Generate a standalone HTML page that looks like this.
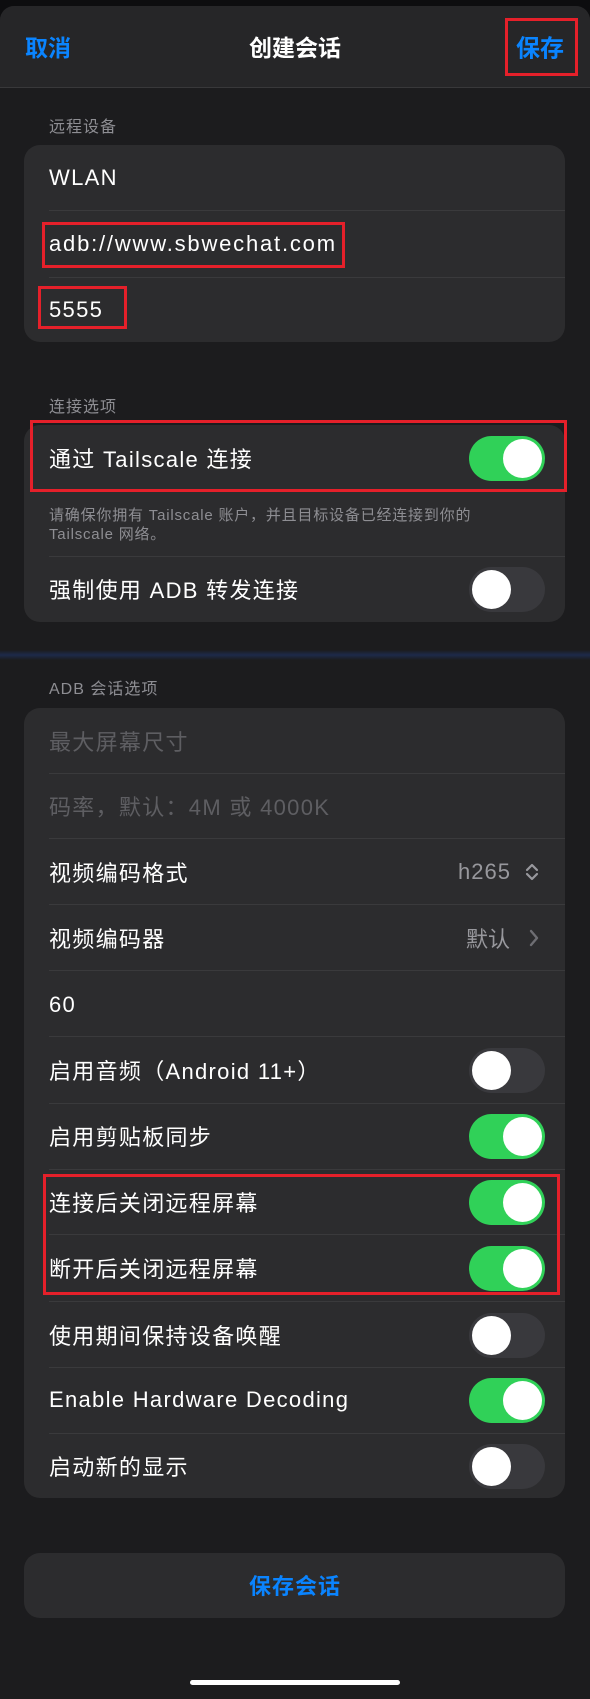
<!DOCTYPE html>
<html><head><meta charset="utf-8"><style>
*{margin:0;padding:0;box-sizing:border-box}
body{width:590px;height:1699px;background:#0d0d0f;font-family:"Liberation Sans","Noto Sans CJK SC",sans-serif;position:relative;overflow:hidden;color:#fff}
.sheet{position:absolute;left:0;top:6px;width:590px;height:1693px;background:#1c1c1e;border-radius:14px 14px 0 0}
.hdr{position:absolute;left:0;top:6px;width:590px;height:82px;background:#262628;border-radius:14px 14px 0 0;border-bottom:1px solid #38383a}
.a{position:absolute}
.lbl{position:absolute;left:49px;font-size:16px;color:#8e8e93;letter-spacing:1px;transform:translateY(-50%)}
.card{position:absolute;left:24px;width:541px;background:#2c2c2e;border-radius:16px}
.t{position:absolute;left:49px;font-size:22px;letter-spacing:1.3px;transform:translateY(-50%);white-space:nowrap}
.sep{position:absolute;left:49px;right:25px;height:1px;background:#3a3a3c}
.tg{position:absolute;left:469px;width:76px;height:45px;border-radius:23px;background:#39393d}
.tg::after{content:"";position:absolute;top:3px;left:3px;width:39px;height:39px;border-radius:50%;background:#fff}
.tg.on{background:#30d158}
.tg.on::after{left:34px}
.red{position:absolute;border:3px solid #e5202a}
</style></head><body>
<div class="sheet"></div>
<div class="hdr"></div>
<div class="a" style="left:25px;top:46px;transform:translateY(-50%);font-size:23px;color:#0a84ff;font-weight:bold">取消</div>
<div class="a" style="left:0;width:590px;text-align:center;top:46px;transform:translateY(-50%);font-size:23px;font-weight:bold">创建会话</div>
<div class="a" style="left:516px;top:46px;transform:translateY(-50%);font-size:24px;color:#0a84ff;font-weight:bold">保存</div>
<div class="red" style="left:505px;top:18px;width:73px;height:58px"></div>

<div class="lbl" style="top:125px">远程设备</div>
<div class="card" style="top:145px;height:197px"></div>
<div class="t" style="top:178px">WLAN</div>
<div class="sep" style="top:210px"></div>
<div class="t" style="top:244px;letter-spacing:1.8px">adb://www.sbwechat.com</div>
<div class="sep" style="top:277px"></div>
<div class="t" style="top:310px">5555</div>
<div class="red" style="left:42px;top:222px;width:303px;height:46px"></div>
<div class="red" style="left:38px;top:286px;width:89px;height:43px"></div>

<div class="lbl" style="top:405px">连接选项</div>
<div class="card" style="top:425px;height:197px"></div>
<div class="t" style="top:458px">通过 Tailscale 连接</div>
<div class="tg on" style="top:436px"></div>
<div class="red" style="left:30px;top:420px;width:537px;height:72px"></div>
<div class="a" style="left:49px;top:506px;font-size:15px;line-height:19px;color:#8e8e93;letter-spacing:0.8px">请确保你拥有 Tailscale 账户，并且目标设备已经连接到你的<br>Tailscale 网络。</div>
<div class="sep" style="top:556px"></div>
<div class="t" style="top:589px">强制使用 ADB 转发连接</div>
<div class="tg" style="top:567px"></div>

<div class="a" style="left:0;top:650px;width:590px;height:10px;background:linear-gradient(#1c1c1e,#1d2a4a 50%,#1c1c1e)"></div>

<div class="lbl" style="top:687px">ADB 会话选项</div>
<div class="card" style="top:708px;height:790px"></div>
<div class="t" style="top:741px;color:#5e5e62">最大屏幕尺寸</div>
<div class="sep" style="top:773px"></div>
<div class="t" style="top:806px;color:#5e5e62">码率，默认：4M 或 4000K</div>
<div class="sep" style="top:838px"></div>
<div class="t" style="top:872px">视频编码格式</div>
<div class="a" style="left:458px;top:872px;transform:translateY(-50%);font-size:22px;color:#98989d;letter-spacing:1px">h265</div>
<svg class="a" style="left:524px;top:862px" width="16" height="20" viewBox="0 0 16 20"><path d="M3 8 L8 3 L13 8 M3 12 L8 17 L13 12" fill="none" stroke="#98989d" stroke-width="2.2" stroke-linecap="round" stroke-linejoin="round"/></svg>
<div class="sep" style="top:904px"></div>
<div class="t" style="top:938px">视频编码器</div>
<div class="a" style="left:466px;top:938px;transform:translateY(-50%);font-size:22px;color:#98989d">默认</div>
<svg class="a" style="left:528px;top:928px" width="12" height="20" viewBox="0 0 12 20"><path d="M3 3 L9 10 L3 17" fill="none" stroke="#6e6e73" stroke-width="2.4" stroke-linecap="round" stroke-linejoin="round"/></svg>
<div class="sep" style="top:970px"></div>
<div class="t" style="top:1005px">60</div>
<div class="sep" style="top:1036px"></div>
<div class="t" style="top:1070px">启用音频（Android 11+）</div>
<div class="tg" style="top:1048px"></div>
<div class="sep" style="top:1103px"></div>
<div class="t" style="top:1136px">启用剪贴板同步</div>
<div class="tg on" style="top:1114px"></div>
<div class="sep" style="top:1169px"></div>
<div class="t" style="top:1202px">连接后关闭远程屏幕</div>
<div class="tg on" style="top:1180px"></div>
<div class="sep" style="top:1234px"></div>
<div class="t" style="top:1268px">断开后关闭远程屏幕</div>
<div class="tg on" style="top:1246px"></div>
<div class="red" style="left:43px;top:1174px;width:517px;height:121px"></div>
<div class="sep" style="top:1301px"></div>
<div class="t" style="top:1335px">使用期间保持设备唤醒</div>
<div class="tg" style="top:1313px"></div>
<div class="sep" style="top:1367px"></div>
<div class="t" style="top:1400px">Enable Hardware Decoding</div>
<div class="tg on" style="top:1378px"></div>
<div class="sep" style="top:1433px"></div>
<div class="t" style="top:1466px">启动新的显示</div>
<div class="tg" style="top:1444px"></div>

<div class="card" style="top:1553px;height:65px"></div>
<div class="a" style="left:0;width:590px;text-align:center;top:1585px;transform:translateY(-50%);font-size:22px;color:#0a84ff;font-weight:bold;letter-spacing:1px">保存会话</div>
<div class="a" style="left:190px;top:1680px;width:210px;height:5px;border-radius:3px;background:#fff"></div>
</body></html>
